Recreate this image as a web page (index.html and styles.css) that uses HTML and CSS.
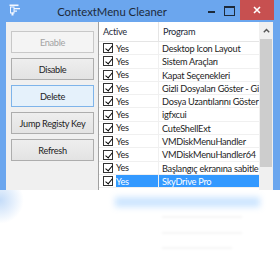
FILE: index.html
```html
<!DOCTYPE html>
<html>
<head>
<meta charset="utf-8">
<link rel="stylesheet" href="styles.css">
</head>
<body>
<div class="window">
  <div class="titlebar">
    <svg class="appicon" width="12" height="12" viewBox="0 0 12 12">
      <rect x="0.5" y="0.5" width="9" height="1.6" fill="#f4f8ff"/>
      <rect x="1.5" y="3" width="3.5" height="6" fill="none" stroke="#f4f8ff" stroke-width="1"/>
      <rect x="5" y="4" width="6" height="1.3" fill="#f4f8ff"/>
      <rect x="2.5" y="8.5" width="2" height="3" fill="#f4f8ff"/>
      <rect x="5" y="6.5" width="3" height="1.2" fill="#f4f8ff"/>
    </svg>
    <div class="title">ContextMenu Cleaner</div>
    <div class="controls">
      <span class="ctl min"></span>
      <span class="ctl max"></span>
      <span class="close">
        <svg width="8" height="8" viewBox="0 0 8 8"><path d="M1 1L7 7M7 1L1 7" stroke="#fff" stroke-width="1.6"/></svg>
      </span>
    </div>
  </div>
  <div class="client">
    <div class="sidebar">
      <button class="btn disabled">Enable</button>
      <button class="btn">Disable</button>
      <button class="btn hot">Delete</button>
      <button class="btn">Jump Registy Key</button>
      <button class="btn">Refresh</button>
    </div>
    <div class="list">
      <div class="grid">
        <div class="head">
          <div class="c1">Active</div>
          <div class="c2">Program</div>
        </div>
        <div class="row"><div class="c1"><span class="cb"></span>Yes</div><div class="c2">Desktop Icon Layout</div></div>
        <div class="row"><div class="c1"><span class="cb"></span>Yes</div><div class="c2">Sistem Araçları</div></div>
        <div class="row"><div class="c1"><span class="cb"></span>Yes</div><div class="c2">Kapat Seçenekleri</div></div>
        <div class="row"><div class="c1"><span class="cb"></span>Yes</div><div class="c2">Gizli Dosyaları Göster - Gizle</div></div>
        <div class="row"><div class="c1"><span class="cb"></span>Yes</div><div class="c2">Dosya Uzantılarını Göster -</div></div>
        <div class="row"><div class="c1"><span class="cb"></span>Yes</div><div class="c2">igfxcui</div></div>
        <div class="row"><div class="c1"><span class="cb"></span>Yes</div><div class="c2">CuteShellExt</div></div>
        <div class="row"><div class="c1"><span class="cb"></span>Yes</div><div class="c2">VMDiskMenuHandler</div></div>
        <div class="row"><div class="c1"><span class="cb"></span>Yes</div><div class="c2">VMDiskMenuHandler64</div></div>
        <div class="row"><div class="c1"><span class="cb"></span>Yes</div><div class="c2">Başlangıç ekranına sabitle</div></div>
        <div class="row sel"><div class="c1"><span class="cb"></span>Yes</div><div class="c2">SkyDrive Pro</div></div>
      </div>
      <div class="scroll">
        <div class="arrow"><svg width="7" height="5" viewBox="0 0 7 5"><path d="M0.8 4.2L3.5 1.5L6.2 4.2" fill="none" stroke="#555" stroke-width="1.4"/></svg></div>
        <div class="thumb"></div>
        <div class="track"></div>
      </div>
    </div>
  </div>
</div>
<div class="reflection">
  <div class="rl-left"></div>
  <div class="rl-bar"></div>
  <div class="rl-line l1"></div>
  <div class="rl-line l2"></div>
  <div class="rl-line l3"></div>
</div>
</body>
</html>
```
FILE: styles.css
```css
* { box-sizing: border-box; }
html, body { margin: 0; padding: 0; }
body {
  width: 280px;
  height: 270px;
  overflow: hidden;
  background: #fff;
  font-family: "Lato", "Liberation Sans", sans-serif;
  font-size: 9.2px;
  letter-spacing: -0.25px;
  color: #1e1e1e;
}
.window {
  height: 190px;
  background: #6ba6ee;
  padding: 0 7px 0 6px;
  display: flex;
  flex-direction: column;
}
.titlebar {
  height: 22px;
  display: flex;
  align-items: center;
}
.appicon { margin-left: 3px; margin-top: -2px; flex: none; }
.title {
  flex: 1;
  text-align: center;
  font-family: "Lato", sans-serif;
  font-size: 11.3px;
  letter-spacing: 0;
  color: #1d2a3a;
  padding-top: 1px;
}
.controls {
  display: flex;
  align-items: flex-start;
  height: 22px;
  margin-right: -1px;
}
.ctl { display: block; position: relative; width: 18px; height: 20px; }
.min::after {
  content: ""; position: absolute; left: 5px; top: 11px; width: 7px; height: 2px; background: #1d2a3a;
}
.max::after {
  content: ""; position: absolute; left: 3px; top: 6px; width: 9px; height: 7px;
  border: 1px solid #1d2a3a; border-top-width: 2px;
}
.close {
  width: 34px; height: 20px; margin-left: 1px;
  background: #c75050;
  display: flex; align-items: center; justify-content: center;
}
.client {
  flex: 1;
  display: flex;
  background: #f0f0f0;
  min-height: 0;
}
.sidebar {
  width: 92px;
  padding: 9px 4px 0 5px;
  display: flex;
  flex-direction: column;
  gap: 5px;
}
.btn {
  height: 22px;
  font-family: "Lato", sans-serif;
  font-size: 9.2px;
  letter-spacing: -0.3px;
  color: #1e1e1e;
  background: linear-gradient(#eeeeee, #e3e3e3);
  border: 1px solid #adadad;
  padding: 0;
}
.btn.disabled { color: #a3a3a3; background: #f4f4f4; border-color: #c8c8c8; }
.btn.hot { background: #e5f1fb; border-color: #7eb4ea; }
.list {
  flex: 1;
  display: flex;
  background: #fff;
  border-left: 1px solid #a0a0a0;
  min-width: 0;
  overflow: hidden;
}
.grid { flex: 1; min-width: 0; overflow: hidden; }
.head, .row { display: flex; white-space: nowrap; }
.head {
  height: 20px;
  align-items: center;
  border-bottom: 1px solid #e5e5e5;
  color: #1e2a3a;
}
.head .c1 { padding-left: 4px; }
.head .c2 { padding-left: 4px; border-left: 1px solid #e5e5e5; height: 20px; display: flex; align-items: center; }
.c1 { width: 59px; flex: none; display: flex; align-items: center; }
.c2 { flex: 1; overflow: hidden; padding-left: 3px; }
.row {
  height: 13.3px;
  line-height: 13px;
  border-bottom: 1px solid #f0f0f0;
}
.row .c1 { padding-left: 4px; }
.row .c2 { border-left: 1px solid #f0f0f0; }
.cb {
  width: 10px; height: 10px; flex: none;
  border: 1px solid #333;
  background: #fff;
  margin-right: 3px;
  position: relative;
}
.cb::after {
  content: "";
  position: absolute;
  left: 2.5px; top: 0px;
  width: 3px; height: 6px;
  border: solid #000;
  border-width: 0 1.8px 1.8px 0;
  transform: rotate(40deg);
}
.row.sel .c2 { background: #3399ff; color: #fff; }
.row.sel .c1 { background: linear-gradient(to right, #fff 17px, #3399ff 17px); color: #fff; }
.scroll {
  width: 14px;
  flex: none;
  display: flex;
  flex-direction: column;
  background: #f0f0f0;
}
.arrow { height: 17px; display: flex; align-items: center; justify-content: center; }
.thumb { height: 128px; margin: 0 1px; background: #cdcdcd; }
.track { flex: 1; }
.reflection {
  height: 80px;
  position: relative;
  background: #fff;
}
.rl-left {
  position: absolute; left: 0; top: 0; width: 24px; height: 34px;
  background: radial-gradient(ellipse at 0 30%, rgba(107,166,238,0.4), rgba(107,166,238,0) 70%);
}
.rl-bar {
  position: absolute; left: 115px; top: 7px; width: 145px; height: 10px;
  background: rgba(51,153,255,0.25);
  filter: blur(3px);
}
.rl-line { position: absolute; height: 2px; background: rgba(0,0,0,0.04); filter: blur(1px); }
.l1 { left: 162px; top: 26px; width: 80px; }
.l2 { left: 162px; top: 42px; width: 80px; }
.l3 { left: 162px; top: 57px; width: 70px; }
```
